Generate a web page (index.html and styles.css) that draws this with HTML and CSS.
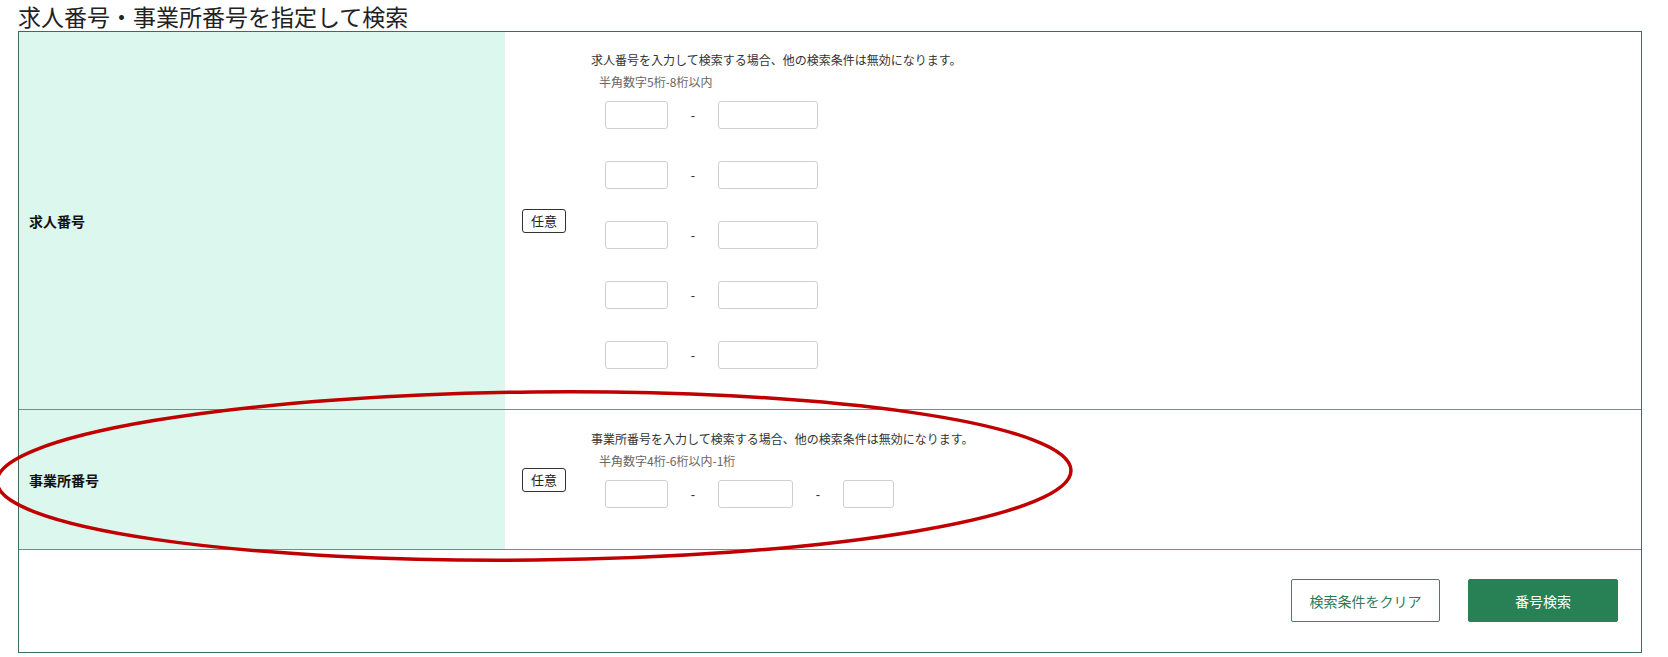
FILE: index.html
```html
<!DOCTYPE html>
<html lang="ja">
<head>
    <meta charset="UTF-8">
    <meta name="viewport" content="width=device-width, initial-scale=1.0">
    <title>求人番号・事業所番号を指定して検索</title>
    <link rel="stylesheet" href="styles.css">
</head>
<body>

<div class="page">
    <h2 class="section-title">求人番号・事業所番号を指定して検索</h2>

    <div class="search-box">
        <!-- 求人番号 -->
        <div class="search-row">
            <div class="item-name">求人番号</div>
            <div class="item-body">
                <span class="badge">任意</span>
                <div class="item-content">
                    <p class="note">求人番号を入力して検索する場合、他の検索条件は無効になります。</p>
                    <p class="hint">半角数字5桁-8桁以内</p>
                    <div class="input-list">
                        <div class="number-group">
                            <input type="text" class="num num-s">
                            <span class="dash">-</span>
                            <input type="text" class="num num-l">
                        </div>
                        <div class="number-group">
                            <input type="text" class="num num-s">
                            <span class="dash">-</span>
                            <input type="text" class="num num-l">
                        </div>
                        <div class="number-group">
                            <input type="text" class="num num-s">
                            <span class="dash">-</span>
                            <input type="text" class="num num-l">
                        </div>
                        <div class="number-group">
                            <input type="text" class="num num-s">
                            <span class="dash">-</span>
                            <input type="text" class="num num-l">
                        </div>
                        <div class="number-group">
                            <input type="text" class="num num-s">
                            <span class="dash">-</span>
                            <input type="text" class="num num-l">
                        </div>
                    </div>
                </div>
            </div>
        </div>

        <!-- 事業所番号 -->
        <div class="search-row office-row">
            <div class="item-name">事業所番号</div>
            <div class="item-body">
                <span class="badge">任意</span>
                <div class="item-content">
                    <p class="note">事業所番号を入力して検索する場合、他の検索条件は無効になります。</p>
                    <p class="hint">半角数字4桁-6桁以内-1桁</p>
                    <div class="input-list">
                        <div class="number-group">
                            <input type="text" class="num num-s">
                            <span class="dash">-</span>
                            <input type="text" class="num num-m">
                            <span class="dash">-</span>
                            <input type="text" class="num num-xs">
                        </div>
                    </div>
                </div>
            </div>
        </div>

        <!-- Buttons -->
        <div class="search-actions">
            <button class="btn btn-clear">検索条件をクリア</button>
            <button class="btn btn-search">番号検索</button>
        </div>
    </div>
</div>

<!-- red marker drawn over the screen -->
<svg class="marker" width="1668" height="657" viewBox="0 0 1668 657">
    <ellipse cx="534" cy="476" rx="537" ry="84" transform="rotate(-0.6 534 476)"
             fill="none" stroke="#c00000" stroke-width="3.5"/>
</svg>

</body>
</html>
```

FILE: styles.css
```css
/* General Styling */
body {
    margin: 0;
    background-color: #fff;
    color: #222;
    font-family: "Noto Sans CJK JP", "Noto Sans", sans-serif;
}

.page {
    position: relative;
    padding-left: 18px;
}

.section-title {
    margin: 0;
    padding-top: 2px;
    font-size: 23px;
    font-weight: normal;
    line-height: 29px;
    color: #222;
}

/* Search Box */
.search-box {
    width: 1624px;
    border: 1px solid #3f6b5c;
    box-sizing: border-box;
}

.search-row {
    display: grid;
    grid-template-columns: 486px 1fr;
}

.office-row {
    border-top: 1px solid #6f9184;
    min-height: 140px;
    box-sizing: border-box;
}

.item-name {
    display: flex;
    align-items: center;
    padding-left: 10px;
    background-color: #dcf8ee;
    font-size: 14px;
    font-weight: bold;
    color: #111;
}

.item-body {
    display: flex;
    align-items: center;
    padding-left: 17px;
}

.badge {
    display: inline-block;
    width: 44px;
    height: 24px;
    line-height: 22px;
    box-sizing: border-box;
    border: 1px solid #333;
    border-radius: 3px;
    text-align: center;
    font-size: 13px;
    color: #222;
}

.item-content {
    margin-left: 25px;
    padding: 19px 0 40px;
}

.note {
    margin: 0 0 4px;
    font-size: 12px;
    line-height: 18px;
    color: #333;
}

.hint {
    margin: 0 0 10px 8px;
    font-size: 12px;
    line-height: 18px;
    color: #666;
}

/* Number Inputs */
.input-list {
    display: flex;
    flex-direction: column;
    gap: 32px;
    padding-left: 14px;
}

.number-group {
    display: flex;
    align-items: center;
}

.num {
    height: 28px;
    margin: 0;
    padding: 0 4px;
    box-sizing: border-box;
    border: 1px solid #cfcfcf;
    border-radius: 3px;
    background-color: #fff;
}

.num-xs { width: 51px; }
.num-s { width: 63px; }
.num-m { width: 75px; }
.num-l { width: 100px; }

.dash {
    width: 50px;
    text-align: center;
    font-family: "Liberation Sans", sans-serif;
    font-size: 13px;
    color: #333;
}

/* Buttons */
.search-actions {
    display: flex;
    justify-content: flex-end;
    gap: 28px;
    padding: 29px 23px 30px;
    border-top: 1px solid #6f9184;
}

.btn {
    height: 43px;
    box-sizing: border-box;
    border-radius: 2px;
    font-family: inherit;
    font-size: 14px;
    cursor: pointer;
}

.btn-clear {
    width: 149px;
    background-color: #fff;
    border: 1px solid #4f7a6b;
    color: #2f7a58;
}

.btn-search {
    width: 150px;
    background-color: #288055;
    border: 1px solid #288055;
    color: #fff;
}

/* Red marker */
.marker {
    position: absolute;
    left: 0;
    top: 0;
    pointer-events: none;
}
```
